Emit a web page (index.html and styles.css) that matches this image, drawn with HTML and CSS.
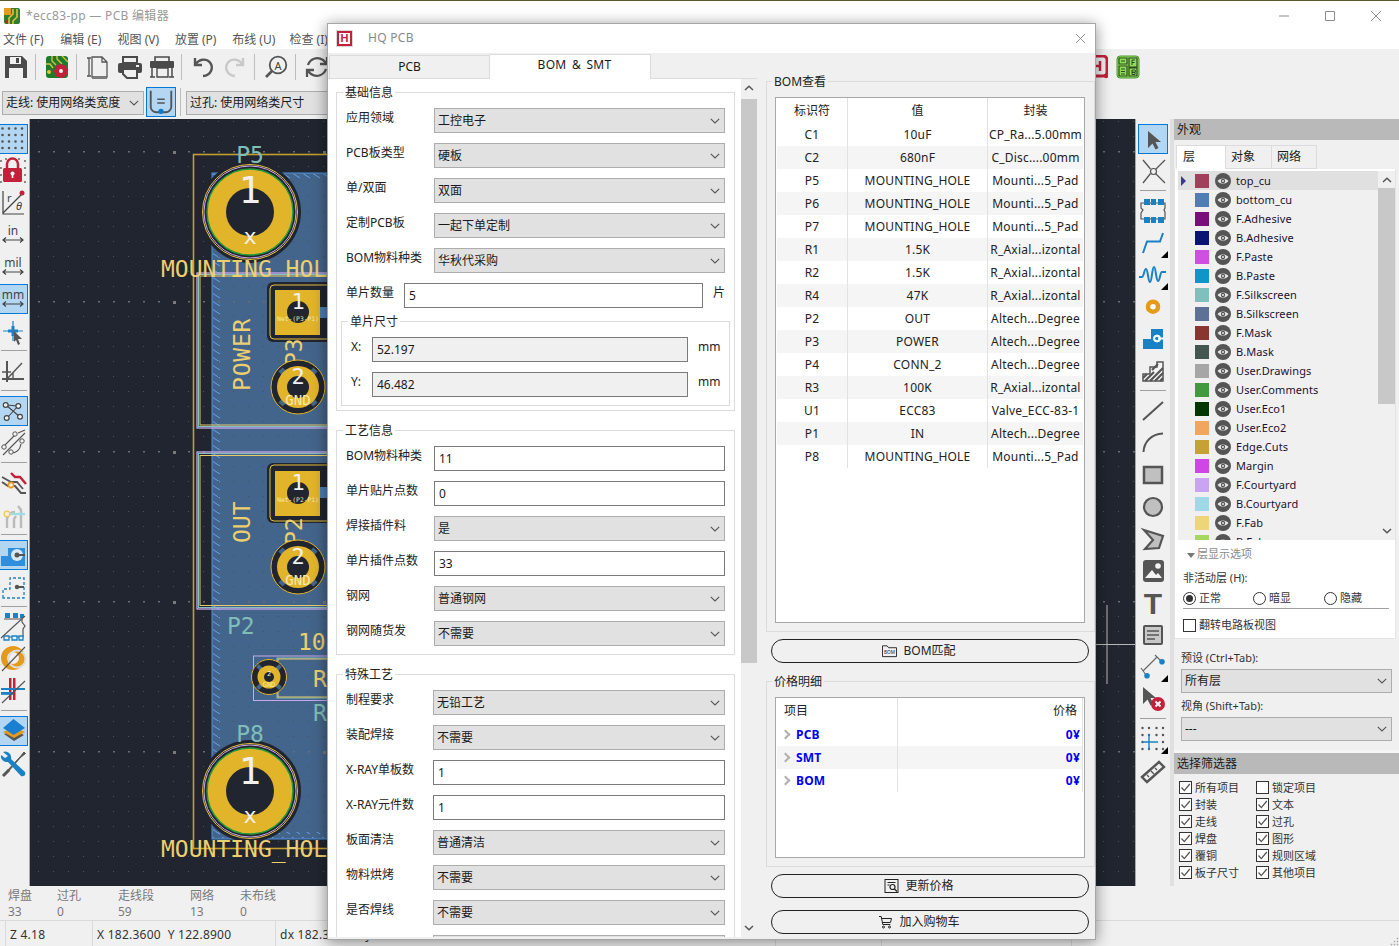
FILE: index.html
```html
<!DOCTYPE html>
<html lang="zh">
<head>
<meta charset="utf-8">
<title>ecc83-pp — PCB 编辑器</title>
<link rel="stylesheet" href="styles.css">
</head>
<body>
<svg class="defs" width="0" height="0">
  <symbol id="eye" viewBox="0 0 16 16">
    <circle cx="8" cy="8" r="8" fill="#555"/>
    <path d="M2.5 8C5 4.6 11 4.6 13.5 8 11 11.4 5 11.4 2.5 8z" fill="#e8e8e8"/>
    <circle cx="8" cy="8" r="2.2" fill="#555"/>
    <circle cx="8" cy="8" r="1" fill="#e8e8e8"/>
  </symbol>
  <symbol id="chev" viewBox="0 0 10 6"><path d="M.8.8 5 5l4.2-4.2" fill="none" stroke="#555" stroke-width="1.1"/></symbol>
  <symbol id="tick" viewBox="0 0 13 13"><path d="M2.5 6.5 5.3 9.6 10.8 3" fill="none" stroke="#555" stroke-width="1.3"/></symbol>
</svg>

<div class="app">
  <div class="wall"></div>
  <header class="titlebar">
    <svg class="appicon" viewBox="0 0 16 16"><rect width="16" height="16" rx="2" fill="#2f7d2f"/><path d="M0 0h7v7H0z" fill="#e39a20"/><path d="M9 1v5l-4 4v6M13 1v8l-4 4v3" fill="none" stroke="#e0c040" stroke-width="1.6"/><path d="M1 12h3v3H1z" fill="#c4203a"/></svg>
    <span class="titletext">*ecc83-pp — PCB 编辑器</span>
    <div class="winctl">
      <svg viewBox="0 0 12 12"><path d="M1 6h10" stroke="#8c8c8c" fill="none"/></svg>
      <svg viewBox="0 0 12 12"><path d="M1.5 1.5h9v9h-9z" stroke="#8c8c8c" fill="none"/></svg>
      <svg viewBox="0 0 12 12"><path d="M1 1l10 10M11 1 1 11" stroke="#8c8c8c" fill="none"/></svg>
    </div>
  </header>
  <nav class="menubar">
    <span>文件 (F)</span><span>编辑 (E)</span><span>视图 (V)</span><span>放置 (P)</span><span>布线 (U)</span><span>检查 (I)</span>
  </nav>
  <div class="toolbar1">
    <svg class="tbtn" viewBox="0 0 24 24"><path d="M1 1h17l5 5v17H1z" fill="#4a4a4a"/><rect x="6" y="2" width="11" height="7" fill="#f0f0f0"/><rect x="12" y="3" width="3" height="5" fill="#4a4a4a"/><rect x="5" y="13" width="14" height="10" fill="#f0f0f0"/></svg>
    <i class="tsep"></i>
    <svg class="tbtn" viewBox="0 0 24 24"><rect x="1" y="1" width="22" height="22" rx="3" fill="#1f7a2c"/><path d="M7 1v5l4 4M12 1v3l5 5M1 9h4l3 4M17 1l6 6" stroke="#d8c040" stroke-width="1.4" fill="none"/><circle cx="4" cy="17" r="2" fill="#e8c040"/><circle cx="16" cy="16" r="5" fill="none" stroke="#c4203a" stroke-width="3.4"/><path d="M16 9v14M9 16h14M11 11l10 10M21 11 11 21" stroke="#c4203a" stroke-width="2"/><circle cx="16" cy="16" r="2" fill="#f0f0f0"/></svg>
    <i class="tsep"></i>
    <svg class="tbtn" viewBox="0 0 24 24"><path d="M6 2h10l5 5v15H6zM16 2v5h5M3 3v18M1 3h4M1 21h4M6 24h15" fill="none" stroke="#555" stroke-width="1.3"/></svg>
    <svg class="tbtn" viewBox="0 0 24 24"><rect x="5" y="2" width="14" height="6" fill="none" stroke="#4a4a4a" stroke-width="2"/><rect x="0" y="8" width="24" height="10" rx="2" fill="#4a4a4a"/><path d="M5 14h14v9H9l-4-4z" fill="#f0f0f0" stroke="#4a4a4a" stroke-width="2"/><rect x="18" y="10" width="3" height="2" fill="#f0f0f0"/></svg>
    <svg class="tbtn" viewBox="0 0 24 24"><path d="M5 2h14v5H5z" fill="none" stroke="#4a4a4a" stroke-width="1.6"/><rect x="0" y="6" width="24" height="7" rx="1" fill="#4a4a4a"/><path d="M2 13v9M22 13v9M0 22h5M19 22h5" stroke="#4a4a4a" stroke-width="1.5" fill="none"/><path d="M7 13h11v9H7z" fill="#f0f0f0" stroke="#4a4a4a" stroke-width="1.4"/></svg>
    <i class="tsep"></i>
    <svg class="tbtn" viewBox="0 0 24 24"><path d="M4 3v7h7M4.500 9.500C8 4 15 3 19 7.500c4 5 1 13-7 13.500" fill="none" stroke="#555" stroke-width="2.400"/></svg>
    <svg class="tbtn" viewBox="0 0 24 24"><path d="M20 3v7h-7M19.500 9.500C16 4 9 3 5 7.500c-4 5-1 13 7 13.500" fill="none" stroke="#c9c9c9" stroke-width="2.400"/></svg>
    <i class="tsep"></i>
    <svg class="tbtn" viewBox="0 0 24 24"><circle cx="14" cy="10" r="8.300" fill="none" stroke="#555" stroke-width="1.800"/><path d="M8 16 2 22" stroke="#555" stroke-width="2.600"/><text x="14" y="14.500" class="ictext" text-anchor="middle">A</text></svg>
    <i class="tsep"></i>
    <svg class="tbtn" viewBox="0 0 24 24"><path d="M3 10C5 4 12 1 18 5l3 3M22 2v7h-7M21 14c-2 6-9 9-15 5l-3-3M2 22v-7h7" fill="none" stroke="#555" stroke-width="2.300"/></svg>
    <svg class="tbtn tright" viewBox="0 0 24 24"><rect x="2" y="1" width="21" height="20" rx="4" fill="none" stroke="#c4203a" stroke-width="3"/><path d="M8 6v10M16 6v10M8 11h8" stroke="#c4203a" stroke-width="2.500"/><circle cx="22" cy="21" r="2.200" fill="#c4203a"/></svg>
    <svg class="tbtn" viewBox="0 0 24 24"><rect x="1" y="1" width="22" height="22" rx="3" fill="#8edc5a" stroke="#4c9a30" stroke-width="1"/><path d="M3 3h8v6H3zM3 11h8v10H3zM13 3h8v9h-8zM13 13h8v8h-8z" fill="none" stroke="#2c4a20" stroke-width="1.200"/><path d="M5 6h4M5 14h4M5 16.500h4M5 19h4M16 5v5M16 5h3M16 7.500h2.500M16 15v4.500M16 15h2.500a1 1 0 0 1 0 2.300H16M16 17.300h3v2.200h-3" stroke="#2c4a20" fill="none"/></svg>
  </div>
  <div class="toolbar2">
    <div class="combo tcombo"><span>走线: 使用网络类宽度</span><svg class="chev"><use href="#chev"/></svg></div>
    <div class="lockbtn"><svg viewBox="0 0 30 30"><path d="M4 3v17a6 6 0 0 0 6 6h10a6 6 0 0 0 6-6V3" fill="none" stroke="#555" stroke-width="2"/><path d="M11 12h8M11 16h8" stroke="#555" stroke-width="1.500"/><circle cx="15" cy="25" r="2.800" fill="#0f78c8"/></svg></div>
    <i class="tsep2"></i>
    <div class="combo tcombo wide"><span>过孔: 使用网络类尺寸</span><svg class="chev"><use href="#chev"/></svg></div>
  </div>

  <main class="workspace">
    <aside class="vtools left">
      <div class="vbtn on"><svg viewBox="0 0 30 30"><path d="M4.500 4.500h0M11 4.500h0M17.500 4.500h0M24 4.500h0M4.500 11h0M11 11h0M17.500 11h0M24 11h0M4.500 17.500h0M11 17.500h0M17.500 17.500h0M24 17.500h0M4.500 24h0M11 24h0M17.500 24h0M24 24h0" stroke="#555" stroke-width="2.600" stroke-linecap="round"/></svg></div>
      <div class="vbtn"><svg viewBox="0 0 30 30"><path d="M3 5h0M3 12h0M3 19h0M3 26h0M27 5h0M27 12h0M27 19h0M27 26h0M8 3h0M21 3h0" stroke="#666" stroke-width="2" stroke-linecap="round"/><path d="M9 13V8a5.500 5.500 0 0 1 11 0v5" fill="none" stroke="#c4203a" stroke-width="2.500"/><rect x="5" y="12" width="19" height="14" rx="1.500" fill="#c4203a"/><circle cx="14.500" cy="17.500" r="2" fill="#fff"/><rect x="13.700" y="18" width="1.600" height="4" fill="#fff"/></svg></div>
      <div class="vbtn"><svg viewBox="0 0 30 30"><path d="M5 3v23h21" fill="none" stroke="#444" stroke-width="1.200"/><path d="M5 25 24 6" stroke="#444" stroke-width="1.200"/><circle cx="24" cy="5" r="2.500" fill="#c4203a"/><text x="9" y="14" class="ictext">r</text><text x="18" y="22" class="ictext ital">θ</text></svg></div>
      <div class="vbtn"><svg viewBox="0 0 30 30"><text x="15" y="15" class="icunit" text-anchor="middle">in</text><path d="M5 20h20M8 17.500 5 20l3 2.500M22 17.500l3 2.500-3 2.500" fill="none" stroke="#444" stroke-width="1.200"/></svg></div>
      <div class="vbtn"><svg viewBox="0 0 30 30"><text x="15" y="15" class="icunit" text-anchor="middle">mil</text><path d="M5 20h20M8 17.500 5 20l3 2.500M22 17.500l3 2.500-3 2.500" fill="none" stroke="#444" stroke-width="1.200"/></svg></div>
      <div class="vbtn on"><svg viewBox="0 0 30 30"><text x="15" y="15" class="icunit" text-anchor="middle">mm</text><path d="M5 20h20M8 17.500 5 20l3 2.500M22 17.500l3 2.500-3 2.500" fill="none" stroke="#444" stroke-width="1.200"/></svg></div>
      <div class="vbtn"><svg viewBox="0 0 30 30"><path d="M5 15h20M15 5v20" stroke="#1a81c4" stroke-width="1.200"/><path d="M10 15h10M15 10v10" stroke="#1a81c4" stroke-width="3"/><path d="M16 15l8 8h-4l2 5-2 1-2-5-2 2z" fill="#555"/></svg></div>
      <i class="vsep"></i>
      <div class="vbtn"><svg viewBox="0 0 30 30"><path d="M9 5v21M4 23h22" stroke="#555" stroke-width="2" fill="none"/><path d="M9 23 24 7M4 16h9M15 16v7" stroke="#555" stroke-width="1.400" fill="none"/></svg></div>
      <i class="vsep"></i>
      <div class="vbtn on"><svg viewBox="0 0 30 30"><path d="M8 9l14 12M20 10l-11 12M8 9l12 1" stroke="#444" stroke-width="1.100"/><g fill="#f4f4f4" stroke="#444" stroke-width="1.200"><circle cx="7.700" cy="9" r="2.400"/><circle cx="20.300" cy="10" r="2.400"/><circle cx="8.700" cy="22" r="2.400"/><circle cx="22" cy="20.700" r="2.400"/></g></svg></div>
      <div class="vbtn"><svg viewBox="0 0 30 30"><path d="M4 20 17 7M20 5 27 2M5 27 27 5" stroke="#555" fill="none" stroke-width="1.100"/><path d="M13 25c6 0 9-3 10-9" stroke="#555" fill="none" stroke-width="1.200"/><g fill="#f4f4f4" stroke="#555"><circle cx="17" cy="6" r="2.200"/><circle cx="6" cy="19" r="2.200"/><circle cx="13" cy="24" r="2.200"/><circle cx="24" cy="13" r="2.200"/></g></svg></div>
      <i class="vsep"></i>
      <div class="vbtn"><svg viewBox="0 0 30 30"><path d="M13 5l4 4h5l6 7" fill="none" stroke="#c4203a" stroke-width="2.400"/><path d="M4 9l9 5h6l6 7" fill="none" stroke="#555" stroke-width="1.800"/><path d="M4 14l6 4h7l6 7h5" fill="none" stroke="#555" stroke-width="2"/><circle cx="13" cy="17" r="2.600" fill="#f0f0f0" stroke="#e59a19" stroke-width="1.600"/></svg></div>
      <div class="vbtn"><svg viewBox="0 0 30 30"><path d="M9 28v-9a8 8 0 0 1 8-7M16 28v-9l2-3M23 28V10l-3-4" fill="none" stroke="#bbb" stroke-width="2.400"/><path d="M6 14h21" stroke="#9fdbe8" stroke-width="2.400"/><circle cx="9" cy="14" r="2.800" fill="#f6f0d8" stroke="#f0c860" stroke-width="1.300"/></svg></div>
      <i class="vsep"></i>
      <div class="vbtn on"><svg viewBox="0 0 30 30"><path d="M3 26V16h7V8h17v18z" fill="#2f8fdc"/><circle cx="19" cy="15" r="6" fill="#d8e8f4"/><circle cx="19" cy="15" r="2.500" fill="#555"/><path d="M19 15h8" stroke="#555" stroke-width="2"/></svg></div>
      <div class="vbtn"><svg viewBox="0 0 30 30"><path d="M5 26v-9h7V6h14v20z" fill="none" stroke="#1a81c4" stroke-width="1.300" stroke-dasharray="3 2"/><path d="M19 15h7" stroke="#555" stroke-width="2"/><circle cx="19" cy="15" r="2.200" fill="#555"/></svg></div>
      <i class="vsep"></i>
      <div class="vbtn"><svg viewBox="0 0 30 30"><path d="M6 7h18v3l3 4-2 3v8H6" fill="none" stroke="#555" stroke-width="1.200"/><path d="M7 1h5v5H7zM15 1h5v5h-5z" fill="#1a81c4"/><path d="M22 2h4v4h-4z" fill="#1a81c4"/><path d="M6 24h5v4H6zM14 24h5v4h-5zM21 24h4v4h-4z" fill="#f0f0f0" stroke="#1a81c4" stroke-width="1.300"/><path d="M3 26 27 4" stroke="#555" stroke-width="1.100"/></svg></div>
      <div class="vbtn"><svg viewBox="0 0 30 30"><circle cx="15" cy="14" r="9" fill="none" stroke="#e59a19" stroke-width="6"/><circle cx="19" cy="15" r="8.500" fill="none" stroke="#ddd" stroke-width="2"/><path d="M4 27 27 3" stroke="#555" stroke-width="1.100"/></svg></div>
      <div class="vbtn"><svg viewBox="0 0 30 30"><rect x="11" y="2" width="2.500" height="22" fill="#c4203a"/><rect x="15" y="2" width="2.500" height="22" fill="#c4203a"/><rect x="3" y="12" width="24" height="2" fill="#1a81c4"/><rect x="3" y="16" width="12" height="2.800" fill="#1a81c4"/><path d="M4 27 27 5" stroke="#555" stroke-width="1.100"/></svg></div>
      <i class="vsep"></i>
      <div class="vbtn on"><svg viewBox="0 0 30 30"><path d="M6 18 16 14l10 5-10 6z" fill="#555"/><path d="M5 16l11-5 11 5-11 6z" fill="#e59a19"/><path d="M15.500 3 27 12 15.500 19 5 12z" fill="#1a7fd0"/></svg></div>
      <div class="vbtn"><svg viewBox="0 0 30 30"><path d="M8 24l14-15 4-5 1.500 1.500-5 4L9 25z" fill="#555" stroke="#555"/><path d="M5 28l6-6" stroke="#555" stroke-width="3"/><path d="M5 4a6 6 0 0 1 8 7l14 13c1 3-1 5-4 4L10 14A6 6 0 0 1 3 7l4 3 3-2-5-4z" fill="#1a81c4"/></svg></div>
    </aside>

    <div class="canvas">
      <svg class="pcb" viewBox="30 120 1105 766" width="1105" height="766">
        <defs>
          <pattern id="dotg" x="38" y="122" width="15" height="15" patternUnits="userSpaceOnUse"><rect width="1" height="1" fill="#4c5058"/></pattern>
          <pattern id="rowg" x="38" y="152" width="15" height="150" patternUnits="userSpaceOnUse"><rect width="2" height="1.500" fill="#6a6c70"/></pattern>
          <pattern id="colg" x="173" y="152" width="150" height="150" patternUnits="userSpaceOnUse"><rect width="3" height="3" fill="#7a7a7a"/></pattern>
          <pattern id="hatch" x="212" y="174" width="10" height="8" patternUnits="userSpaceOnUse"><path d="M0 0 8 5" stroke="#62a0e4" stroke-width="1"/></pattern>
        </defs>
        <rect x="212" y="174" width="700" height="666" fill="#44658b" stroke="#4f94dc"/>
        <rect x="213" y="175" width="8" height="664" fill="url(#hatch)"/>
        <rect x="213" y="175" width="700" height="6" fill="url(#hatch)"/>
        <rect x="213" y="833" width="700" height="6" fill="url(#hatch)"/>
        <rect x="30" y="120" width="1105" height="766" fill="url(#dotg)"/>
        <rect x="30" y="120" width="1105" height="766" fill="url(#rowg)"/>
        <rect x="30" y="120" width="1105" height="766" fill="url(#colg)"/>
        <rect x="193.500" y="155.500" width="800" height="694" fill="none" stroke="#c49f2f" stroke-width="1.600"/>

        <g fill="none">
          <rect x="197" y="274" width="800" height="155" stroke="#c9a8ee" stroke-width="1.300"/>
          <rect x="198.500" y="275.500" width="800" height="152" stroke="#86bfbc"/>
          <rect x="200" y="277" width="800" height="149" stroke="#e8cc68"/>
          <rect x="197" y="453" width="800" height="157" stroke="#c9a8ee" stroke-width="1.300"/>
          <rect x="198.500" y="454.500" width="800" height="154" stroke="#86bfbc"/>
          <rect x="200" y="456.500" width="800" height="150" stroke="#e8cc68"/>
        </g>

        <g class="mh">
          <circle cx="250" cy="213" r="51" fill="#20252f"/>
          <circle cx="250" cy="213" r="43" fill="#e2b42a" stroke="#249a3c" stroke-width="1.500"/>
          <circle cx="250" cy="213" r="24" fill="#20252f"/>
          <circle cx="250" cy="213" r="46" fill="none" stroke="#c9a8ee"/>
          <circle cx="250" cy="213" r="47.500" fill="none" stroke="#e8c040"/>
          <text x="250" y="204" class="t-white t-36" text-anchor="middle">1</text>
          <text x="250" y="245" class="t-white t-22" text-anchor="middle">x</text>
        </g>
        <g class="mh">
          <circle cx="250" cy="792" r="51" fill="#20252f"/>
          <circle cx="250" cy="792" r="43" fill="#e2b42a" stroke="#249a3c" stroke-width="1.500"/>
          <circle cx="250" cy="792" r="24" fill="#20252f"/>
          <circle cx="250" cy="792" r="46" fill="none" stroke="#c9a8ee"/>
          <circle cx="250" cy="792" r="47.500" fill="none" stroke="#e8c040"/>
          <text x="250" y="785" class="t-white t-36" text-anchor="middle">1</text>
          <text x="250" y="824" class="t-white t-22" text-anchor="middle">x</text>
        </g>
        <text x="250" y="164" class="t-teal t-23" text-anchor="middle">P5</text>
        <text x="250" y="743" class="t-teal t-23" text-anchor="middle">P8</text>
        <text x="161" y="278" class="t-yel t-23">MOUNTING_HOLE</text>
        <text x="161" y="858" class="t-yel t-23">MOUNTING_HOLE</text>
        <text x="250" y="392" class="t-yel t-23 wide-sp" transform="rotate(-90 250 392)">POWER</text>
        <text x="250" y="544" class="t-yel t-23" transform="rotate(-90 250 544)">OUT</text>

        <g>
          <rect x="267" y="283" width="70" height="60" rx="6" fill="#20252f"/>
          <rect x="270" y="286" width="64" height="54" rx="4" fill="none" stroke="#e8c040"/>
          <rect x="275" y="291" width="45" height="45" fill="#e2b42a"/>
          <rect x="320" y="308" width="8" height="11" fill="#4a7cb4"/>
          <circle cx="298" cy="313" r="11" fill="#20252f"/>
          <text x="298" y="310" class="t-white t-22" text-anchor="middle">1</text>
          <text x="298" y="322" class="t-net" text-anchor="middle">Net-(P3-P1)</text>
        </g>
        <text x="302" y="367" class="t-yel t-23" transform="rotate(-90 302 367)">P3</text>
        <g>
          <circle cx="298" cy="388" r="27" fill="#20252f"/>
          <path d="M280.500 370.500l7 7M315.500 370.500l-7 7M280.500 405.500l7-7M315.500 405.500l-7-7" stroke="#44658b" stroke-width="6"/>
          <circle cx="298" cy="388" r="21" fill="#e2b42a"/>
          <circle cx="298" cy="388" r="27" fill="none" stroke="#e2b42a"/>
          <circle cx="298" cy="388" r="11" fill="#20252f"/>
          <text x="298" y="385" class="t-white t-22" text-anchor="middle">2</text>
          <text x="298" y="406" class="t-lt t-14" text-anchor="middle">GND</text>
        </g>

        <g>
          <rect x="267" y="464" width="70" height="60" rx="6" fill="#20252f"/>
          <rect x="270" y="466" width="64" height="56" rx="4" fill="none" stroke="#e8c040"/>
          <rect x="275" y="472" width="45" height="45" fill="#e2b42a"/>
          <rect x="320" y="488" width="8" height="11" fill="#4a7cb4"/>
          <circle cx="298" cy="494" r="11" fill="#20252f"/>
          <text x="298" y="491" class="t-white t-22" text-anchor="middle">1</text>
          <text x="298" y="503" class="t-net" text-anchor="middle">Net-(P2-P1)</text>
        </g>
        <text x="302" y="546" class="t-yel t-23" transform="rotate(-90 302 546)">P2</text>
        <g>
          <circle cx="298" cy="568" r="27" fill="#20252f"/>
          <path d="M280.500 550.500l7 7M315.500 550.500l-7 7M280.500 585.500l7-7M315.500 585.500l-7-7" stroke="#44658b" stroke-width="6"/>
          <circle cx="298" cy="568" r="21" fill="#e2b42a"/>
          <circle cx="298" cy="568" r="27" fill="none" stroke="#e2b42a"/>
          <circle cx="298" cy="568" r="11" fill="#20252f"/>
          <text x="298" y="565" class="t-white t-22" text-anchor="middle">2</text>
          <text x="298" y="586" class="t-lt t-14" text-anchor="middle">GND</text>
        </g>

        <text x="227" y="635" class="t-teal t-23">P2</text>
        <text x="298" y="651" class="t-yel t-23">10</text>
        <rect x="253.500" y="657" width="300" height="44.500" fill="none" stroke="#c9a8ee"/>
        <rect x="277" y="659" width="300" height="40" fill="none" stroke="#86bfbc"/>
        <rect x="278" y="660" width="300" height="38" fill="none" stroke="#e8cc68"/>
        <circle cx="269" cy="678" r="17.500" fill="#20252f"/>
        <path d="M257.500 666.500l4 4M280.500 666.500l-4 4M257.500 689.500l4-4M280.500 689.500l-4-4" stroke="#44658b" stroke-width="4"/>
        <circle cx="269" cy="678" r="17.500" fill="none" stroke="#e2b42a"/>
        <circle cx="269" cy="678" r="11.500" fill="#e2b42a"/>
        <circle cx="269" cy="678" r="5" fill="#20252f"/>
        <text x="269" y="677" class="t-white t-7" text-anchor="middle">2</text>
        <text x="269" y="688" class="t-lt t-7" text-anchor="middle">GND</text>
        <text x="313" y="688" class="t-yel t-23">R</text>
        <text x="313" y="722" class="t-teal t-23">R</text>

        <path d="M1107 606v79M1095 645.500h40" stroke="#b8b8b8" fill="none"/>
      </svg>
    </div>

    <aside class="vtools right">
      <div class="vbtn on"><svg viewBox="0 0 30 30"><path d="M10 7v17l4.500-4.500 3 6 3-1.500-3-6H23z" fill="#555"/></svg></div>
      <div class="vbtn"><svg viewBox="0 0 30 30"><path d="M5 4l7.500 9M27 27l-9.500-9.500M27 4l-9.500 9.500M5 27l7.500-9.500" stroke="#555" stroke-width="1.300"/><circle cx="15.500" cy="15.500" r="3" fill="#f0f0f0" stroke="#555" stroke-width="1.200"/></svg></div>
      <i class="vsep"></i>
      <div class="vbtn"><svg viewBox="0 0 30 30"><path d="M3 7h24v5l-1 2 1 2v7H3v-6l2-3-2-2z" fill="none" stroke="#555" stroke-width="1.200"/><path d="M6 3h6v6H6zM13 3h5v6h-5zM20 3h6v6h-6zM6 21h6v6H6zM13 21h5v6h-5zM20 21h6v6h-6z" fill="#1a81c4"/></svg></div>
      <div class="vbtn"><svg viewBox="0 0 30 30"><path d="M5 25l4-11.500h13L25 5" fill="none" stroke="#1a81c4" stroke-width="2"/><path d="M30 30H23L30 23z" fill="#000"/></svg></div>
      <div class="vbtn"><svg viewBox="0 0 30 30"><path d="M1 17h3c2 0 2-8 4-8s2 13 4 13 2-15 4-15 2 14 4 14 2-9 4-9h4" fill="none" stroke="#1a81c4" stroke-width="2"/><path d="M30 30H23L30 23z" fill="#000"/></svg></div>
      <div class="vbtn"><svg viewBox="0 0 30 30"><circle cx="15" cy="14.700" r="5" fill="#fff" stroke="#e59a19" stroke-width="4.500"/></svg></div>
      <div class="vbtn"><svg viewBox="0 0 30 30"><path d="M5 25V15h8V5h12v20z" fill="#1a81c4"/><circle cx="19" cy="14.500" r="3.500" fill="#fff" stroke="#fff"/><circle cx="19" cy="14.500" r="1.800" fill="#1a81c4"/><path d="M20 14.500h6" stroke="#fff" stroke-width="2"/></svg></div>
      <div class="vbtn"><svg viewBox="0 0 30 30"><path d="M5 25V18h7v-7h7V6h6v19z" fill="#f4f4f4" stroke="#555" stroke-width="1.500"/><path d="M5 22l4-4M7 25l9-9M12 25l13-13M17 25l8-8M22 25l3-3M14 14l6-6" stroke="#555" stroke-width="2.200"/></svg></div>
      <i class="vsep"></i>
      <div class="vbtn"><svg viewBox="0 0 30 30"><path d="M5 24 25 6" stroke="#555" stroke-width="2"/></svg></div>
      <div class="vbtn"><svg viewBox="0 0 30 30"><path d="M5.500 24C6 14 13 6 25 5.500" fill="none" stroke="#555" stroke-width="2"/></svg></div>
      <div class="vbtn"><svg viewBox="0 0 30 30"><rect x="6" y="7" width="18" height="16" fill="#c0c0c0" stroke="#555" stroke-width="2.500"/></svg></div>
      <div class="vbtn"><svg viewBox="0 0 30 30"><circle cx="15" cy="15" r="9" fill="#c0c0c0" stroke="#555" stroke-width="2.200"/></svg></div>
      <div class="vbtn"><svg viewBox="0 0 30 30"><path d="M6 6l19 6-4 12-14 1 8-9z" fill="#c0c0c0" stroke="#555" stroke-width="2.200"/></svg></div>
      <div class="vbtn"><svg viewBox="0 0 30 30"><rect x="5" y="4" width="21" height="22" rx="3" fill="#555"/><path d="M7 22l7-8 4 5 2-2 4 5z" fill="#f4f4f4"/><circle cx="20" cy="10" r="2.800" fill="#f4f4f4"/></svg></div>
      <div class="vbtn"><svg viewBox="0 0 30 30"><text x="15" y="26" class="icbig" text-anchor="middle">T</text></svg></div>
      <div class="vbtn"><svg viewBox="0 0 30 30"><rect x="6" y="6" width="18" height="18" rx="1" fill="#c8c8c8" stroke="#555" stroke-width="2"/><path d="M9 11h12M9 15h12M9 19h8" stroke="#555" stroke-width="1.300"/></svg></div>
      <div class="vbtn"><svg viewBox="0 0 30 30"><path d="M5 19 19 5M3 16l5 7M17 3l6 6" stroke="#666" stroke-width="1.100" fill="none"/><circle cx="9" cy="23.700" r="2.800" fill="#1a81c4"/><circle cx="24" cy="9.700" r="2.800" fill="#1a81c4"/><path d="M30 30H23L30 23z" fill="#000"/></svg></div>
      <div class="vbtn"><svg viewBox="0 0 30 30"><path d="M5 3v17l4.500-4.500 3 6 3-1.500-3-6H18z" fill="#555"/><circle cx="20" cy="20" r="7" fill="#c4203a"/><path d="M17.500 17.500l5 5M22.500 17.500l-5 5" stroke="#fff" stroke-width="1.800"/></svg></div>
      <i class="vsep"></i>
      <div class="vbtn"><svg viewBox="0 0 30 30"><path d="M4.500 4h0M11 4h0M18.500 4h0M25 4h0M4.500 11h0M11 11h0M18.500 11h0M25 11h0M4.500 18h0M25 18h0M4.500 25h0M11 25h0M18.500 25h0M25 25h0" stroke="#555" stroke-width="2.400" stroke-linecap="round"/><path d="M4 18h16M11 10v16" stroke="#1a81c4" stroke-width="1.400"/><path d="M30 30H23L30 23z" fill="#000"/></svg></div>
      <div class="vbtn"><svg viewBox="0 0 30 30"><path d="M4 21 21 6l5 5-17 15z" fill="none" stroke="#555" stroke-width="2.400"/><path d="M9 19l2 2M13 15l3 3M17 12l2 2" stroke="#555" stroke-width="1.400"/></svg></div>
    </aside>
    <div class="sash"></div>

    <section class="panel">
      <div class="phead">外观</div>
      <div class="ptabs"><span class="ptab active">层</span><span class="ptab">对象</span><span class="ptab">网络</span></div>
      <div class="ppane">
        <div class="lwrap">
          <div class="layers">
            <div class="lrow sel"><i class="larrow"></i><b class="sw c1"></b><svg class="eye"><use href="#eye"/></svg><span>top_cu</span></div>
            <div class="lrow"><i class="larrow none"></i><b class="sw c2"></b><svg class="eye"><use href="#eye"/></svg><span>bottom_cu</span></div>
            <div class="lrow"><i class="larrow none"></i><b class="sw c3"></b><svg class="eye"><use href="#eye"/></svg><span>F.Adhesive</span></div>
            <div class="lrow"><i class="larrow none"></i><b class="sw c4"></b><svg class="eye"><use href="#eye"/></svg><span>B.Adhesive</span></div>
            <div class="lrow"><i class="larrow none"></i><b class="sw c5"></b><svg class="eye"><use href="#eye"/></svg><span>F.Paste</span></div>
            <div class="lrow"><i class="larrow none"></i><b class="sw c6"></b><svg class="eye"><use href="#eye"/></svg><span>B.Paste</span></div>
            <div class="lrow"><i class="larrow none"></i><b class="sw c7"></b><svg class="eye"><use href="#eye"/></svg><span>F.Silkscreen</span></div>
            <div class="lrow"><i class="larrow none"></i><b class="sw c8"></b><svg class="eye"><use href="#eye"/></svg><span>B.Silkscreen</span></div>
            <div class="lrow"><i class="larrow none"></i><b class="sw c9"></b><svg class="eye"><use href="#eye"/></svg><span>F.Mask</span></div>
            <div class="lrow"><i class="larrow none"></i><b class="sw c10"></b><svg class="eye"><use href="#eye"/></svg><span>B.Mask</span></div>
            <div class="lrow"><i class="larrow none"></i><b class="sw c11"></b><svg class="eye"><use href="#eye"/></svg><span>User.Drawings</span></div>
            <div class="lrow"><i class="larrow none"></i><b class="sw c12"></b><svg class="eye"><use href="#eye"/></svg><span>User.Comments</span></div>
            <div class="lrow"><i class="larrow none"></i><b class="sw c13"></b><svg class="eye"><use href="#eye"/></svg><span>User.Eco1</span></div>
            <div class="lrow"><i class="larrow none"></i><b class="sw c14"></b><svg class="eye"><use href="#eye"/></svg><span>User.Eco2</span></div>
            <div class="lrow"><i class="larrow none"></i><b class="sw c15"></b><svg class="eye"><use href="#eye"/></svg><span>Edge.Cuts</span></div>
            <div class="lrow"><i class="larrow none"></i><b class="sw c16"></b><svg class="eye"><use href="#eye"/></svg><span>Margin</span></div>
            <div class="lrow"><i class="larrow none"></i><b class="sw c17"></b><svg class="eye"><use href="#eye"/></svg><span>F.Courtyard</span></div>
            <div class="lrow"><i class="larrow none"></i><b class="sw c18"></b><svg class="eye"><use href="#eye"/></svg><span>B.Courtyard</span></div>
            <div class="lrow"><i class="larrow none"></i><b class="sw c19"></b><svg class="eye"><use href="#eye"/></svg><span>F.Fab</span></div>
            <div class="lrow"><i class="larrow none"></i><b class="sw c20"></b><svg class="eye"><use href="#eye"/></svg><span>B.Fab</span></div>
          </div>
          <div class="sbar lsb">
            <svg class="sarrow" viewBox="0 0 10 6"><path d="M1 5 5 1.200 9 5" fill="none" stroke="#555" stroke-width="1.500"/></svg>
            <div class="thumb lth"></div>
            <div class="track"></div>
            <svg class="sarrow" viewBox="0 0 10 6"><path d="M1 1 5 4.800 9 1" fill="none" stroke="#555" stroke-width="1.500"/></svg>
          </div>
        </div>
        <div class="opthead"><i class="tridown"></i>层显示选项</div>
        <div class="optlabel">非活动层 (H):</div>
        <div class="radios">
          <label class="radio r1"><i class="rd on"></i>正常</label>
          <label class="radio r2"><i class="rd"></i>暗显</label>
          <label class="radio"><i class="rd"></i>隐藏</label>
        </div>
        <label class="flip"><i class="cb"></i>翻转电路板视图</label>
      </div>
      <div class="presets">
        <div class="plabel">预设 (Ctrl+Tab):</div>
        <div class="combo pcombo"><span>所有层</span><svg class="chev"><use href="#chev"/></svg></div>
        <div class="plabel">视角 (Shift+Tab):</div>
        <div class="combo pcombo"><span>---</span><svg class="chev"><use href="#chev"/></svg></div>
      </div>
      <div class="gapline"></div>
      <div class="phead filt">选择筛选器</div>
      <div class="filters">
        <label class="fl"><i class="cb"><svg><use href="#tick"/></svg></i>所有项目</label><label class="fl"><i class="cb"></i>锁定项目</label>
        <label class="fl"><i class="cb"><svg><use href="#tick"/></svg></i>封装</label><label class="fl"><i class="cb"><svg><use href="#tick"/></svg></i>文本</label>
        <label class="fl"><i class="cb"><svg><use href="#tick"/></svg></i>走线</label><label class="fl"><i class="cb"><svg><use href="#tick"/></svg></i>过孔</label>
        <label class="fl"><i class="cb"><svg><use href="#tick"/></svg></i>焊盘</label><label class="fl"><i class="cb"><svg><use href="#tick"/></svg></i>图形</label>
        <label class="fl"><i class="cb"><svg><use href="#tick"/></svg></i>覆铜</label><label class="fl"><i class="cb"><svg><use href="#tick"/></svg></i>规则区域</label>
        <label class="fl"><i class="cb"><svg><use href="#tick"/></svg></i>板子尺寸</label><label class="fl"><i class="cb"><svg><use href="#tick"/></svg></i>其他项目</label>
      </div>
    </section>
  </main>

  <div class="stats">
    <div class="stat s1"><span>焊盘</span><span>33</span></div>
    <div class="stat s2"><span>过孔</span><span>0</span></div>
    <div class="stat s3"><span>走线段</span><span>59</span></div>
    <div class="stat s4"><span>网络</span><span>13</span></div>
    <div class="stat"><span>未布线</span><span>0</span></div>
  </div>
  <footer class="statusbar">
    <span class="sc c0"></span>
    <span class="sc cz">Z 4.18</span>
    <span class="sc cx">X 182.3600&nbsp; Y 122.8900</span>
    <span class="sc cd">dx 182.3600&nbsp; dy 122.8900&nbsp; dist 221.9</span>
    <span class="sc ce"></span>
    <span class="sc cf"></span>
    <span class="sc cg"></span>
    <svg class="grip" viewBox="0 0 9 9"><path d="M7.500 1.500h0M7.500 4.500h0M4.500 4.500h0M7.500 7.500h0M4.500 7.500h0M1.500 7.500h0" stroke="#aaa" stroke-width="1.500" stroke-linecap="square"/></svg>
  </footer>
</div>

<div class="dialog">
  <div class="dtitle">
    <span class="hlogo">H</span>
    <span class="dname">HQ PCB</span>
    <svg class="dclose" viewBox="0 0 12 12"><path d="M1 1l10 10M11 1 1 11" stroke="#8c8c8c" fill="none"/></svg>
  </div>
  <div class="dbody">
    <div class="dleft">
      <div class="tabs"><span class="tab">PCB</span><span class="tab active">BOM &amp; SMT</span></div>
      <div class="lpane">
        <div class="scroll">
          <fieldset class="gp g1">
            <legend>基础信息</legend>
            <div class="rows">
              <div class="row"><label>应用领域</label><div class="combo"><span>工控电子</span><svg class="chev"><use href="#chev"/></svg></div></div>
              <div class="row"><label>PCB板类型</label><div class="combo"><span>硬板</span><svg class="chev"><use href="#chev"/></svg></div></div>
              <div class="row"><label>单/双面</label><div class="combo"><span>双面</span><svg class="chev"><use href="#chev"/></svg></div></div>
              <div class="row"><label>定制PCB板</label><div class="combo"><span>一起下单定制</span><svg class="chev"><use href="#chev"/></svg></div></div>
              <div class="row"><label>BOM物料种类</label><div class="combo"><span>华秋代采购</span><svg class="chev"><use href="#chev"/></svg></div></div>
              <div class="row qty"><label>单片数量</label><div class="inp"><span>5</span></div><label class="unit">片</label></div>
            </div>
            <fieldset class="gp nest">
              <legend>单片尺寸</legend>
              <div class="rows">
                <div class="row dim"><label>X:</label><div class="inp ro"><span>52.197</span></div><label class="mm">mm</label></div>
                <div class="row dim"><label>Y:</label><div class="inp ro"><span>46.482</span></div><label class="mm">mm</label></div>
              </div>
            </fieldset>
          </fieldset>
          <fieldset class="gp g2">
            <legend>工艺信息</legend>
            <div class="rows">
              <div class="row"><label>BOM物料种类</label><div class="inp"><span>11</span></div></div>
              <div class="row"><label>单片贴片点数</label><div class="inp"><span>0</span></div></div>
              <div class="row"><label>焊接插件料</label><div class="combo"><span>是</span><svg class="chev"><use href="#chev"/></svg></div></div>
              <div class="row"><label>单片插件点数</label><div class="inp"><span>33</span></div></div>
              <div class="row"><label>钢网</label><div class="combo"><span>普通钢网</span><svg class="chev"><use href="#chev"/></svg></div></div>
              <div class="row"><label>钢网随货发</label><div class="combo"><span>不需要</span><svg class="chev"><use href="#chev"/></svg></div></div>
            </div>
          </fieldset>
          <fieldset class="gp g3">
            <legend>特殊工艺</legend>
            <div class="rows">
              <div class="row"><label>制程要求</label><div class="combo"><span>无铅工艺</span><svg class="chev"><use href="#chev"/></svg></div></div>
              <div class="row"><label>装配焊接</label><div class="combo"><span>不需要</span><svg class="chev"><use href="#chev"/></svg></div></div>
              <div class="row"><label>X-RAY单板数</label><div class="inp"><span>1</span></div></div>
              <div class="row"><label>X-RAY元件数</label><div class="inp"><span>1</span></div></div>
              <div class="row"><label>板面清洁</label><div class="combo"><span>普通清洁</span><svg class="chev"><use href="#chev"/></svg></div></div>
              <div class="row"><label>物料烘烤</label><div class="combo"><span>不需要</span><svg class="chev"><use href="#chev"/></svg></div></div>
              <div class="row"><label>是否焊线</label><div class="combo"><span>不需要</span><svg class="chev"><use href="#chev"/></svg></div></div>
              <div class="row"><label></label><div class="combo"></div></div>
            </div>
          </fieldset>
        </div>
        <div class="sbar dsb">
          <svg class="sarrow" viewBox="0 0 10 6"><path d="M1 5 5 1.200 9 5" fill="none" stroke="#555" stroke-width="1.500"/></svg>
          <div class="thumb dth"></div>
          <div class="track"></div>
          <svg class="sarrow" viewBox="0 0 10 6"><path d="M1 1 5 4.800 9 1" fill="none" stroke="#555" stroke-width="1.500"/></svg>
        </div>
      </div>
    </div>
    <div class="dright">
      <fieldset class="gp rg bomg">
        <legend>BOM查看</legend>
        <div class="tbox bombox">
          <table class="grid bom">
            <thead><tr><th>标识符</th><th>值</th><th>封装</th></tr></thead>
            <tbody>
              <tr><td>C1</td><td>10uF</td><td>CP_Ra...5.00mm</td></tr>
              <tr><td>C2</td><td>680nF</td><td>C_Disc....00mm</td></tr>
              <tr><td>P5</td><td>MOUNTING_HOLE</td><td>Mounti...5_Pad</td></tr>
              <tr><td>P6</td><td>MOUNTING_HOLE</td><td>Mounti...5_Pad</td></tr>
              <tr><td>P7</td><td>MOUNTING_HOLE</td><td>Mounti...5_Pad</td></tr>
              <tr><td>R1</td><td>1.5K</td><td>R_Axial...izontal</td></tr>
              <tr><td>R2</td><td>1.5K</td><td>R_Axial...izontal</td></tr>
              <tr><td>R4</td><td>47K</td><td>R_Axial...izontal</td></tr>
              <tr><td>P2</td><td>OUT</td><td>Altech...Degree</td></tr>
              <tr><td>P3</td><td>POWER</td><td>Altech...Degree</td></tr>
              <tr><td>P4</td><td>CONN_2</td><td>Altech...Degree</td></tr>
              <tr><td>R3</td><td>100K</td><td>R_Axial...izontal</td></tr>
              <tr><td>U1</td><td>ECC83</td><td>Valve_ECC-83-1</td></tr>
              <tr><td>P1</td><td>IN</td><td>Altech...Degree</td></tr>
              <tr><td>P8</td><td>MOUNTING_HOLE</td><td>Mounti...5_Pad</td></tr>
            </tbody>
          </table>
        </div>
      </fieldset>
      <button class="pill first"><svg class="pic" viewBox="0 0 16 14"><path d="M.5 13V1.500h5l1.500 2h8.500V13z" fill="none" stroke="#222"/><text x="8" y="10.500" class="tinybom" text-anchor="middle">BOM</text></svg>BOM匹配</button>
      <fieldset class="gp rg priceg">
        <legend>价格明细</legend>
        <div class="tbox pricebox">
          <table class="grid price">
            <thead><tr><th class="l">项目</th><th class="r">价格</th></tr></thead>
            <tbody>
              <tr><td class="name"><i class="gt"></i>PCB</td><td class="val">0¥</td></tr>
              <tr><td class="name"><i class="gt"></i>SMT</td><td class="val">0¥</td></tr>
              <tr><td class="name"><i class="gt"></i>BOM</td><td class="val">0¥</td></tr>
            </tbody>
          </table>
        </div>
      </fieldset>
      <button class="pill second"><svg class="pic" viewBox="0 0 14 14"><rect x=".5" y=".5" width="13" height="13" fill="none" stroke="#222"/><path d="M3 3.500h8M3 6h2" stroke="#222"/><circle cx="8" cy="8" r="2.500" fill="none" stroke="#222" stroke-width="1.200"/><path d="M10 10l2.500 2.500" stroke="#222" stroke-width="1.200"/></svg>更新价格</button>
      <button class="pill third"><svg class="pic" viewBox="0 0 14 14"><path d="M.5 1.500h2.200l1.600 8h7.500M3 3.500h10l-1 4H4" fill="none" stroke="#222"/><circle cx="5" cy="12" r="1" fill="none" stroke="#222"/><circle cx="11" cy="12" r="1" fill="none" stroke="#222"/></svg>加入购物车</button>
    </div>
  </div>
</div>
</body>
</html>
```

FILE: styles.css
```css
* { box-sizing: border-box; }
html, body { margin: 0; padding: 0; }
body {
  width: 1399px;
  height: 946px;
  overflow: hidden;
  position: relative;
  background: #f0f0f0;
  font: 12px/16px "Noto Sans", "Noto Sans CJK SC", sans-serif;
  color: #1a1a1a;
}
i, b { font-style: normal; font-weight: normal; }
.defs { position: absolute; }
.app { width: 1399px; height: 946px; display: flex; flex-direction: column; }
.wall { height: 1px; background: #5b5a32; flex: none; }

.titlebar { height: 25px; background: #fff; display: flex; align-items: center; padding: 5px 0 0 4px; flex: none; }
.appicon { width: 16px; height: 16px; margin-right: 6px; }
.titletext { color: #999; font-size: 12px; letter-spacing: .3px; }
.winctl { margin-left: auto; display: flex; gap: 34px; padding-right: 17px; }
.winctl svg { width: 12px; height: 12px; }

.menubar { height: 23px; background: #fff; display: flex; align-items: center; padding: 5px 0 0 3px; flex: none; color: #555; }
.menubar span { width: 57.300px; white-space: nowrap; }

.toolbar1 { height: 36px; background: #f0f0f0; display: flex; align-items: center; flex: none; padding-right: 255px; }
.tbtn { width: 24px; height: 24px; margin: 0 4px; flex: none; }
.tright { margin-left: auto; }
.tsep { width: 1px; height: 26px; background: #bdbdbd; margin: 0 5px 0 3px; flex: none; }
.ictext { font: 11px "Noto Sans", sans-serif; fill: #444; }
.ital { font-style: italic; }
.icunit { font: 12px "Noto Sans", sans-serif; fill: #444; }
.icbig { font: bold 30px "Liberation Sans", sans-serif; fill: #555; }

.toolbar2 { height: 34px; background: #f0f0f0; display: flex; align-items: center; flex: none; padding-left: 2px; }
.lockbtn { width: 30px; height: 30px; margin-left: 2px; background: #b3d7f3; border: 1px solid #0078d7; flex: none; }
.lockbtn svg { display: block; width: 28px; height: 28px; }
.tsep2 { width: 1px; height: 28px; background: #bdbdbd; margin: 0 5px 0 4px; flex: none; }

.combo {
  flex: 1;
  min-width: 0;
  height: 25px;
  background: #e1e1e1;
  border: 1px solid #adadad;
  display: flex;
  align-items: center;
  justify-content: space-between;
  padding: 0 4px 0 3px;
  white-space: nowrap;
}
.combo.tcombo { flex: none; width: 142px; height: 24px; margin-top: 1px; }
.combo.tcombo.wide { width: 160px; }
.chev { width: 10px; height: 6px; margin-right: 0; flex: none; }
.inp {
  flex: 1;
  min-width: 0;
  height: 25px;
  background: #fff;
  border: 1px solid #7a7a7a;
  display: flex;
  align-items: center;
  padding-left: 4px;
}
.inp.ro { background: #f0f0f0; }

.workspace { height: 767px; display: flex; flex: none; }
.vtools { background: #f0f0f0; flex: none; display: flex; flex-direction: column; padding-top: 5px; }
.vtools.left { width: 30px; border-right: 1px solid #a8a8a8; }
.vtools.right { width: 35px; border-left: 1px solid #a8a8a8; align-items: center; }
.vbtn { width: 30px; height: 30px; margin-bottom: 2px; flex: none; border: 1px solid transparent; }
.vbtn svg { display: block; width: 30px; height: 30px; margin: -1px; }
.vtools.left .vbtn { margin-left: -2px; }
.vbtn.on { background: #b3d7f3; border-color: #0078d7; }
.vsep { display: block; height: 1px; width: 26px; background: #a0a0a0; margin: 2px 2px 5px; flex: none; }
.vtools.left .vsep { margin-left: 1px; width: 26px; }
.canvas { flex: none; width: 1105px; background: #20252f; overflow: hidden; }
.pcb { display: block; }
.t-23 { font: 23px "DejaVu Sans Mono", monospace; }
.t-36 { font: 37px "DejaVu Sans Mono", monospace; }
.t-22 { font: 22px "DejaVu Sans Mono", monospace; }
.t-14 { font: 14px "DejaVu Sans Mono", monospace; }
.t-7 { font: 7px "DejaVu Sans Mono", monospace; }
.t-net { font: 6.300px "DejaVu Sans Mono", monospace; fill: #f4e8b0; }
.t-white { fill: #f0f0f0; }
.t-teal { fill: #7fbdb8; }
.t-yel { fill: #ecd070; }
.t-lt { fill: #f4e8b0; }
.wide-sp { letter-spacing: .8px; }

.sash { width: 4px; background: #e0e0e0; flex: none; }
.panel { flex: none; width: 225px; background: #f0f0f0; display: flex; flex-direction: column; }
.phead { height: 21px; background: #b9b9b9; padding-left: 3px; line-height: 21px; flex: none; }
.ptabs { height: 29px; padding: 5px 0 0 1px; display: flex; flex: none; }
.ptab { height: 24px; border: 1px solid #dcdcdc; background: #f0f0f0; padding: 3px 0 0 5px; margin-left: -1px; }
.ptab:nth-child(1) { width: 50px; background: #fff; border-bottom-color: #fff; margin-left: 1px; padding-left: 6px; }
.ptab:nth-child(2) { width: 47px; }
.ptab:nth-child(3) { width: 46px; }
.ppane { height: 470px; width: 222px; background: #fff; padding: 2px 0 0 3px; flex: none; border: 1px solid #e4e4e4; border-top: 0; font-size: 11px; }
.lwrap { display: flex; height: 369px; }
.layers { width: 200px; height: 369px; overflow: hidden; background: #f0f0f0; flex: none; }
.lrow { height: 19px; display: flex; align-items: center; padding-left: 3px; color: #1c1030; letter-spacing: .1px; }
.lrow.sel { background: #e0e0e0; }
.larrow { width: 0; height: 0; border-left: 5px solid #3a3a90; border-top: 5px solid transparent; border-bottom: 5px solid transparent; margin-right: 9px; flex: none; }
.larrow.none { border-left-color: transparent; }
.sw { width: 14px; height: 14px; margin-right: 6px; flex: none; }
.eye { width: 16px; height: 16px; margin-right: 5px; flex: none; }
.c1 { background: #a0405a; }
.c2 { background: #4d7fb5; }
.c3 { background: #7a0f7a; }
.c4 { background: #0a1472; }
.c5 { background: #cf50e0; }
.c6 { background: #0e96c8; }
.c7 { background: #80c0bc; }
.c8 { background: #5d7096; }
.c9 { background: #8a3630; }
.c10 { background: #42574f; }
.c11 { background: #a6a6a6; }
.c12 { background: #429a3e; }
.c13 { background: #023600; }
.c14 { background: #f2a55f; }
.c15 { background: #c8a136; }
.c16 { background: #cf45e6; }
.c17 { background: #c9a4f2; }
.c18 { background: #9dd9e6; }
.c19 { background: #eed678; }
.c20 { background: #a5d85f; }

.sbar { width: 17px; display: flex; flex-direction: column; align-items: center; flex: none; background: #f0f0f0; }
.sarrow { width: 10px; height: 6px; flex: none; }
.lsb .sarrow:first-child { margin: 6px 0 5px; }
.lsb .sarrow:last-child { margin: 5px 0 6px; }
.thumb { width: 100%; background: #c8c8c8; flex: none; }
.track { flex: 1; }
.lth { height: 216px; }
.opthead { height: 16px; margin-top: 6px; padding-left: 9px; color: #8a8a8a; display: flex; align-items: center; }
.tridown { width: 0; height: 0; border-top: 5px solid #777; border-left: 4.500px solid transparent; border-right: 4.500px solid transparent; margin-right: 2px; margin-top: 2px; }
.optlabel { margin: 8px 0 0 5px; color: #333; height: 16px; }
.radios { display: flex; margin: 4px 0 0 5px; height: 19px; padding-bottom: 2px; width: 206px; border-bottom: 1px solid #a0a0a0; align-items: center; }
.radio { display: flex; align-items: center; color: #333; gap: 3px; }
.r1 { width: 70px; }
.r2 { width: 71px; }
.rd { width: 13px; height: 13px; border: 1px solid #333; border-radius: 50%; background: #fff; display: flex; align-items: center; justify-content: center; }
.rd.on::after { content: ""; width: 7px; height: 7px; border-radius: 50%; background: #333; }
.flip { display: flex; align-items: center; gap: 3px; margin: 8px 0 0 5px; color: #333; height: 16px; }
.cb { width: 13px; height: 13px; border: 1px solid #333; background: #fff; flex: none; display: block; }
.cb svg { display: block; width: 13px; height: 13px; margin: -1px 0 0 -1px; }

.presets { padding: 11px 0 0 7px; height: 111px; flex: none; }
.plabel { color: #333; height: 16px; font-size: 11px; }
.combo.pcombo { flex: none; width: 211px; height: 24px; margin: 3px 0 5px; }
.gapline { height: 3px; flex: none; background: #f5f5f5; }
.filt { padding-left: 3px; }
.filters { display: grid; grid-template-columns: 77px 1fr; grid-auto-rows: 17px; padding: 5px 0 0 5px; font-size: 11px; }
.fl { display: flex; align-items: center; gap: 3px; white-space: nowrap; color: #333; }

.stats { height: 35px; flex: none; display: flex; padding: 2px 0 0 8px; color: #7a7a7a; border-bottom: 1px solid #dadada; }
.stat { display: flex; flex-direction: column; }
.s1 { width: 49px; }
.s2 { width: 61px; }
.s3 { width: 72px; }
.s4 { width: 50px; }
.statusbar { flex: 1; min-height: 0; display: flex; align-items: center; position: relative; color: #333; letter-spacing: .25px; }
.sc { height: 100%; border-right: 1px solid #dadada; display: flex; align-items: center; padding: 3px 0 0 4px; white-space: nowrap; overflow: hidden; flex: none; }
.c0 { width: 6px; padding: 0; }
.cz { width: 87px; }
.cx { width: 183px; }
.cd { width: 500px; }
.ce { width: 106px; }
.cf { width: 190px; }
.cg { border: 0; }
.grip { width: 9px; height: 9px; position: absolute; right: 0; bottom: 0; }

/* dialog window floats above the editor */
.dialog {
  position: absolute;
  left: 327px;
  top: 23px;
  width: 769px;
  height: 917px;
  background: #f0f0f0;
  border: 1px solid #a6a6a6;
  box-shadow: 0 2px 14px rgba(0, 0, 0, .45);
  display: flex;
  flex-direction: column;
}
.dtitle { height: 29px; background: #fff; display: flex; align-items: center; flex: none; padding: 0 0 1px 9px; }
.hlogo { width: 15px; height: 15px; border: 2px solid #c4203a; color: #c4203a; font: bold 11px/11px "Liberation Sans", sans-serif; text-align: center; box-shadow: 0 0 0 1px #d8d8d8; }
.dname { margin-left: 16px; color: #8a8a8a; letter-spacing: .3px; }
.dclose { width: 11px; height: 11px; margin-left: auto; margin-right: 9px; }
.dbody { flex: 1; min-height: 0; display: flex; }
.dleft { width: 429px; flex: none; display: flex; flex-direction: column; }
.tabs { height: 25px; flex: none; display: flex; align-items: flex-end; padding-left: 1px; }
.tab { width: 161px; height: 23px; border: 1px solid #dcdcdc; border-bottom: 0; text-align: center; line-height: 21px; background: #f0f0f0; margin-bottom: 0; }
.tab.active { height: 25px; background: #fff; line-height: 19px; width: 162px; margin-left: -1px; position: relative; top: 1px; padding-left: 9px; word-spacing: 2px; letter-spacing: .3px; }
.lpane { height: 859px; background: #fff; flex: none; display: flex; border-top: 1px solid #dcdcdc; overflow: hidden; }
.scroll { width: 413px; flex: none; padding: 5px 6px 0 8px; overflow: hidden; }
.gp { margin: 0; min-width: 0; border: 1px solid #dcdcdc; padding: 8px 9px 8px; }
.gp > legend { padding: 0 2px; margin-left: -3px; line-height: 18px; height: 16px; color: #222; white-space: nowrap; }
.rows { display: flex; flex-direction: column; gap: 10px; }
.row { display: flex; height: 25px; }
.row > label { width: 88px; line-height: 20px; flex: none; white-space: nowrap; color: #222; }
.row.qty > label:first-child { width: 58px; }
.row.qty .unit { width: 22px; text-align: right; padding-left: 0; }
.nest { margin: 5px -5px 0; }
.row.dim > label:first-child { width: 21px; }
.row.dim .mm { width: 32px; padding-left: 10px; }
.g1 { padding-bottom: 4px; }
.g2 { margin-top: 11px; }
.g3 { margin-top: 11px; }
.g3 .combo, .g3 .inp { margin-left: -1px; }
.dsb { width: 16px; }
.dsb .sarrow:first-child { margin: 6px 0 8px; }
.dsb .sarrow:last-child { margin: 5px 0 6px; }
.dth { height: 564px; }
.dright { flex: 1; min-width: 0; padding: 20px 0 0 9px; display: flex; flex-direction: column; }
.rg { padding: 8px 9px 8px 8px; }
.tbox { background: #fff; border: 1px solid #a8a8a8; padding: 0 1px; }
.bombox { height: 526px; }
.pricebox { height: 161px; }
.grid { border-collapse: separate; border-spacing: 0; table-layout: fixed; width: 306px; }
.grid th { height: 25px; font-weight: normal; color: #222; text-align: center; border-left: 1px solid #e2e2e2; padding: 0; white-space: nowrap; }
.grid td { height: 23px; text-align: center; border-left: 1px solid #e2e2e2; padding: 0; white-space: nowrap; overflow: hidden; color: #222; letter-spacing: .2px; }
.grid th:first-child, .grid td:first-child { border-left: 0; }
.grid tbody tr:nth-child(even) td { background: #f5f5f5; }
.bom th:nth-child(1) { width: 70px; }
.bom th:nth-child(2) { width: 140px; }
.price th:nth-child(1) { width: 120px; }
.price { border-right: 1px solid #e2e2e2; }
.price th.l { text-align: left; padding-left: 7px; }
.price th.r { text-align: right; padding-right: 5px; }
.price .name { text-align: left; color: #0000f0; font-weight: 700; padding-left: 19px; position: relative; }
.price .val { text-align: right; color: #0000f0; font-weight: 700; padding-right: 2px; }
.gt { position: absolute; left: 5px; top: 8px; width: 7px; height: 7px; border-top: 2px solid #b0b0b0; border-right: 2px solid #b0b0b0; transform: rotate(45deg); }
.pill {
  height: 24px;
  width: 318px;
  margin-left: 5px;
  flex: none;
  background: #f0f0f0;
  border: 1px solid #222;
  border-radius: 12px;
  font: inherit;
  color: #222;
  display: flex;
  align-items: center;
  justify-content: center;
  padding: 0 22px 0 0;
}
.pic { width: 15px; height: 14px; margin-right: 6px; flex: none; }
.tinybom { font: 5px "Noto Sans", sans-serif; fill: #222; }
.first { margin-top: 7px; }
.priceg { margin-top: 10px; }
.second { margin-top: 7px; }
.third { margin-top: 12px; }
```
